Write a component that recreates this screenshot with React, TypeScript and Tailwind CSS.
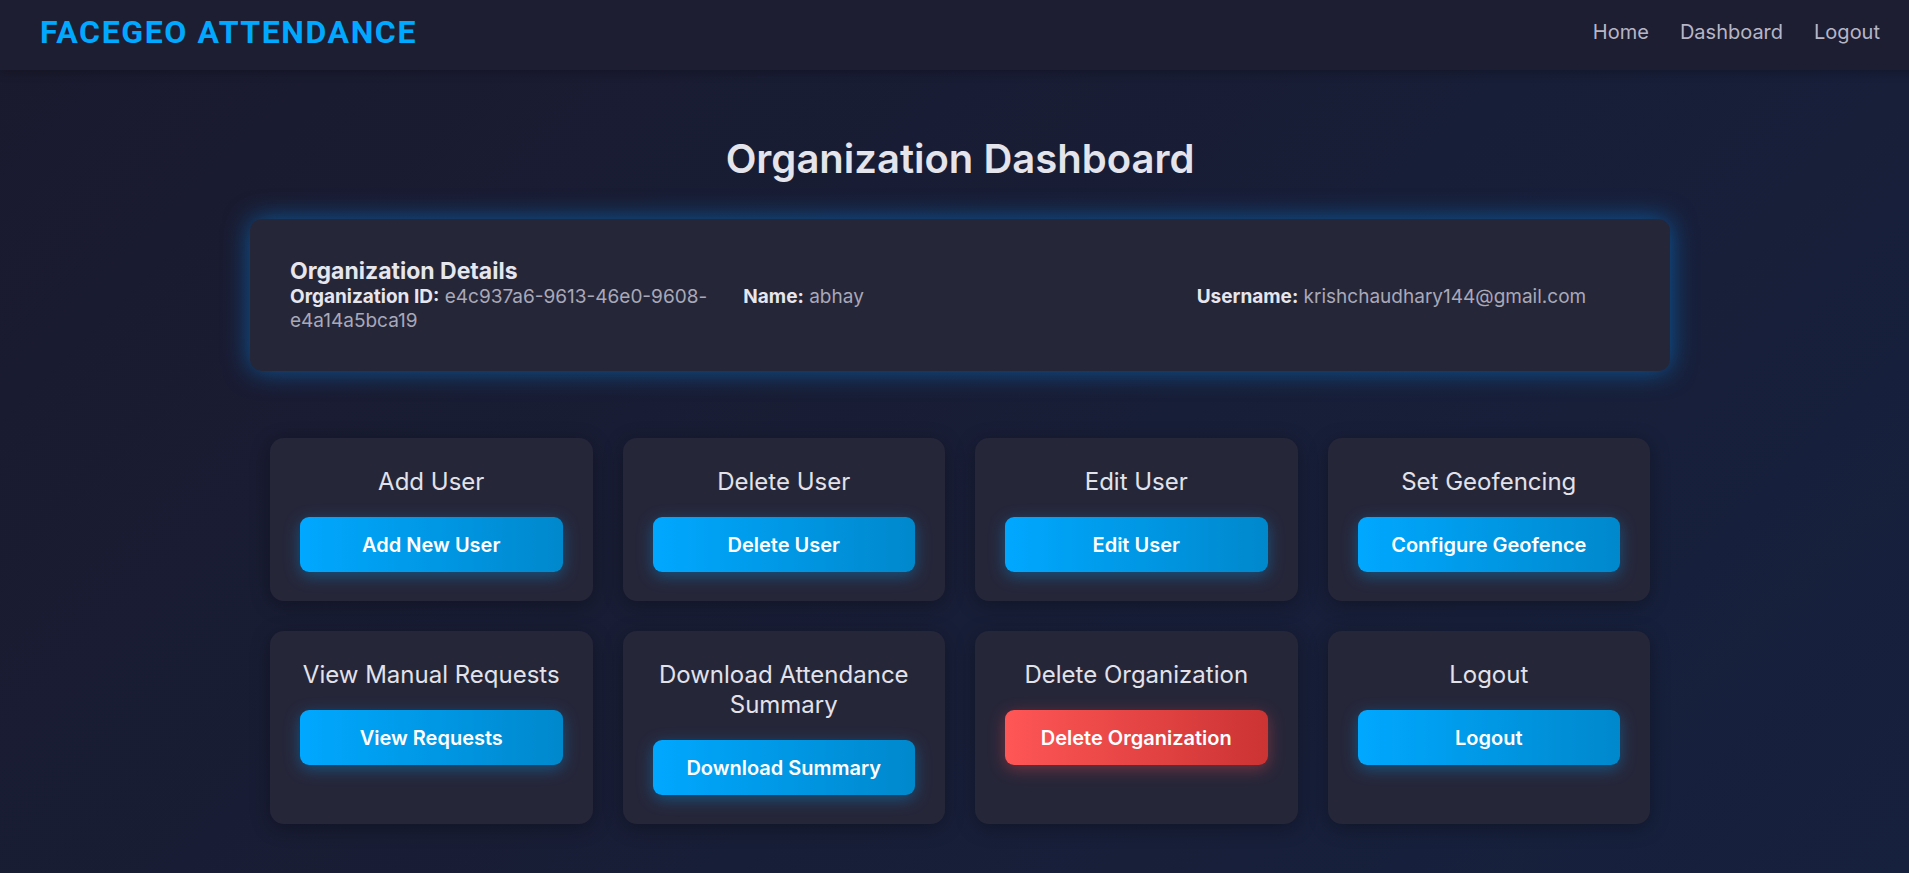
import React from "react";

const actions: { title: string; button: string; danger?: boolean }[] = [
  { title: "Add User", button: "Add New User" },
  { title: "Delete User", button: "Delete User" },
  { title: "Edit User", button: "Edit User" },
  { title: "Set Geofencing", button: "Configure Geofence" },
  { title: "View Manual Requests", button: "View Requests" },
  { title: "Download Attendance Summary", button: "Download Summary" },
  { title: "Delete Organization", button: "Delete Organization", danger: true },
  { title: "Logout", button: "Logout" },
];

export default function App() {
  return (
    <div className="min-h-screen w-full overflow-hidden bg-[linear-gradient(135deg,#1a1a2e_0%,#16213e_100%)] font-['Inter','Noto_Sans',sans-serif]">
      <div className="w-[1920px] min-h-screen">
        <nav className="h-[70px] flex items-center justify-between px-[40px] pb-[6px] bg-[#1e1e32] shadow-[0_2px_10px_rgba(0,0,0,0.25)]">
          <div className="font-['Roboto','Liberation_Sans',sans-serif] font-bold text-[32px] tracking-[1.6px] text-[#00a8ff] leading-none">
            FACEGEO ATTENDANCE
          </div>
          <div className="flex items-center gap-[31px] text-[20px] text-[#b6b6c6]">
            <span>Home</span>
            <span>Dashboard</span>
            <span>Logout</span>
          </div>
        </nav>

        <main className="flex flex-col items-center pt-[65px] pb-[50px]">
          <h1 className="text-[40px] leading-[48px] font-semibold text-[#e4e4ec]">
            Organization Dashboard
          </h1>

          <section className="mt-[36px] w-[1420px] rounded-[12px] bg-[#262639] px-[40px] py-[38px] shadow-[0_0_26px_rgba(0,150,255,0.5)]">
            <h3 className="text-[23px] leading-[28px] font-bold text-[#e6e6ee]">
              Organization Details
            </h3>
            <div className="grid grid-cols-3 gap-[20px] text-[19px] leading-[24px]">
              <p className="text-[#a9a9b8]">
                <strong className="font-bold text-[#e6e6ee]">Organization ID:</strong>{" "}
                e4c937a6-9613-46e0-9608-e4a14a5bca19
              </p>
              <p className="text-[#a9a9b8]">
                <strong className="font-bold text-[#e6e6ee]">Name:</strong> abhay
              </p>
              <p className="text-[#a9a9b8]">
                <strong className="font-bold text-[#e6e6ee]">Username:</strong>{" "}
                krishchaudhary144@gmail.com
              </p>
            </div>
          </section>

          <section className="mt-[67px] w-[1380px] grid grid-cols-4 gap-[30px]">
            {actions.map((a) => (
              <div
                key={a.title}
                className="rounded-[14px] bg-[#262639] px-[30px] pt-[29px] pb-[29px] flex flex-col items-center text-center shadow-[0_4px_20px_rgba(0,0,0,0.3)]"
              >
                <h4 className="text-[24px] leading-[30px] font-normal text-[#e2e2ea]">
                  {a.title}
                </h4>
                <button
                  className={
                    a.danger
                      ? "mt-[20px] w-full h-[55px] rounded-[9px] text-white text-[20px] font-semibold bg-[linear-gradient(90deg,#ff5656_0%,#cc3333_100%)] shadow-[0_4px_16px_rgba(255,80,80,0.35)]"
                      : "mt-[20px] w-full h-[55px] rounded-[9px] text-white text-[20px] font-semibold bg-[linear-gradient(90deg,#00a8ff_0%,#0088cc_100%)] shadow-[0_4px_16px_rgba(0,168,255,0.35)]"
                  }
                >
                  {a.button}
                </button>
              </div>
            ))}
          </section>
        </main>
      </div>
    </div>
  );
}
